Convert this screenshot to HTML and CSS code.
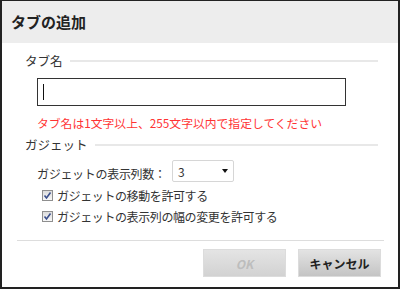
FILE: index.html
```html
<!DOCTYPE html>
<html lang="ja">
<head>
    <meta charset="UTF-8">
    <title>タブの追加</title>
    <link rel="stylesheet" href="styles.css">
</head>
<body>
    <div class="dialog">
        <div class="dialog-header">
            <h1>タブの追加</h1>
        </div>

        <div class="dialog-body">
            <div class="section-title">
                <span>タブ名</span>
                <div class="rule"></div>
            </div>
            <div class="input-wrap">
                <input type="text" class="tab-name" value="">
                <span class="caret"></span>
            </div>
            <p class="error">タブ名は1文字以上、255文字以内で指定してください</p>

            <div class="section-title section-gadget">
                <span>ガジェット</span>
                <div class="rule"></div>
            </div>
            <div class="field-row">
                <span class="field-label">ガジェットの表示列数：</span>
                <div class="select">
                    <span>3</span>
                    <span class="arrow"></span>
                </div>
            </div>
            <label class="check-row">
                <span class="check">
                    <svg width="9" height="9" viewBox="0 0 9 9"><path d="M1.5 4.5 L3.5 7 L7.5 1.5" fill="none" stroke="#3b4f8c" stroke-width="1.6"/></svg>
                </span>
                ガジェットの移動を許可する
            </label>
            <label class="check-row">
                <span class="check">
                    <svg width="9" height="9" viewBox="0 0 9 9"><path d="M1.5 4.5 L3.5 7 L7.5 1.5" fill="none" stroke="#3b4f8c" stroke-width="1.6"/></svg>
                </span>
                ガジェットの表示列の幅の変更を許可する
            </label>
        </div>

        <div class="dialog-footer">
            <button class="btn" disabled>OK</button>
            <button class="btn">キャンセル</button>
        </div>
    </div>
</body>
</html>
```

FILE: styles.css
```css
body {
    margin: 0;
    font-family: "Noto Sans CJK JP", "Noto Sans", sans-serif;
    font-size: 12px;
    color: #333;
    background: #fff;
}
.dialog {
    width: 400px;
    height: 289px;
    box-sizing: border-box;
    border: 2px solid #222;
    border-top-width: 1px;
    background: #fff;
}
.dialog-header {
    height: 42px;
    background: #ededed;
    padding-left: 9px;
}
.dialog-header h1 {
    margin: 0;
    font-size: 15px;
    line-height: 42px;
    color: #222;
}
.dialog-body {
    padding: 0 20px 0 23px;
}
.section-title {
    display: flex;
    align-items: center;
    gap: 7px;
    margin-top: 10px;
    height: 16px;
    line-height: 16px;
    font-size: 12.5px;
}
.section-title .rule {
    flex: 1;
    height: 2px;
    background: #e8e8e8;
}
.section-gadget {
    margin-top: 6px;
}
.input-wrap {
    position: relative;
    width: 309px;
    margin: 9px 0 0 12px;
}
.tab-name {
    display: block;
    box-sizing: border-box;
    width: 309px;
    height: 28px;
    border: 1px solid #333;
    border-radius: 0;
    outline: none;
    padding: 0 5px;
}
.caret {
    position: absolute;
    left: 6px;
    top: 6px;
    width: 1px;
    height: 16px;
    background: #111;
}
.error {
    margin: 9px 0 0 12px;
    line-height: 16px;
    color: #f33;
    font-size: 11.8px;
}
.field-row {
    display: flex;
    align-items: center;
    margin: 7px 0 0 12px;
}
.field-label {
    width: 135px;
    padding-top: 5px;
    letter-spacing: -0.3px;
}
.select {
    display: flex;
    align-items: center;
    justify-content: space-between;
    box-sizing: border-box;
    width: 62px;
    height: 22px;
    border: 1px solid #d6d6d6;
    border-radius: 2px;
    padding: 0 5px 0 5px;
    font-size: 12px;
}
.arrow {
    width: 0;
    height: 0;
    border-left: 3.5px solid transparent;
    border-right: 3.5px solid transparent;
    border-top: 4px solid #111;
}
.check-row {
    display: flex;
    align-items: center;
    gap: 4px;
    height: 21px;
    margin-left: 17px;
    letter-spacing: -0.4px;
}
.check-row:first-of-type {
    margin-top: 3px;
}
.check {
    display: flex;
    align-items: center;
    justify-content: center;
    box-sizing: border-box;
    width: 11px;
    height: 11px;
    border: 1px solid #8f8f8f;
    background: linear-gradient(#dcdcdc, #f8f8f8);
}
.dialog-footer {
    display: flex;
    justify-content: flex-end;
    gap: 12px;
    margin: 13px 14px 0 15px;
    padding: 8px 3px 0 0;
    border-top: 1px solid #ddd;
}
.btn {
    width: 83px;
    height: 28px;
    border: 1px solid #dcdcdc;
    background: linear-gradient(#e3e3e3, #c4c4c4);
    font-family: "Noto Sans CJK JP", sans-serif;
    font-size: 12px;
    font-weight: bold;
    color: #222;
    cursor: pointer;
}
.btn:disabled {
    background: linear-gradient(#e4e4e4, #d2d2d2);
    color: #bdbdbd;
    font-style: italic;
    cursor: default;
}
```
